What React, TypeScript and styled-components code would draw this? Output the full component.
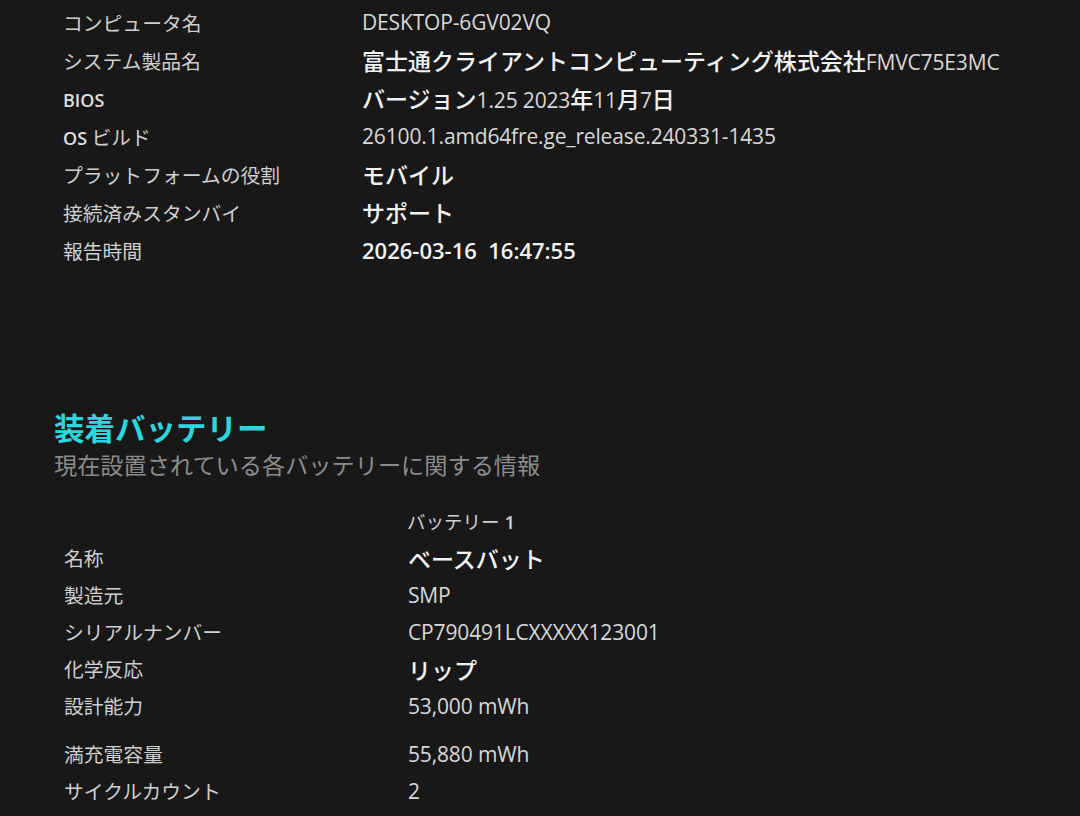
import React from "react";
import styled, { createGlobalStyle } from "styled-components";

const Global = createGlobalStyle`
  html, body { margin: 0; padding: 0; background: #181818; }
  body { font-family: "Noto Sans", "Noto Sans CJK JP", sans-serif; color: #d6d6d6; }
`;

const Page = styled.div`
  width: 1080px;
  height: 816px;
  overflow: hidden;
  background: #181818;
  padding: 3px 0 0 54px;
  box-sizing: border-box;
`;

const Table = styled.div<{ $indent: number }>`
  display: flex;
  flex-direction: column;
  padding-left: ${(p) => p.$indent}px;
`;

const RowBox = styled.div<{ $labelWidth: number; $h: number; $gap?: number }>`
  display: grid;
  grid-template-columns: ${(p) => p.$labelWidth}px 1fr;
  height: ${(p) => p.$h}px;
  margin-top: ${(p) => p.$gap ?? 0}px;
  align-items: center;
`;

const Label = styled.div`
  font-family: "Noto Sans CJK JP", sans-serif;
  font-size: 19.8px;
  color: #cfcfcf;
  white-space: nowrap;
`;

const LatinLabel = styled.span`
  font-family: "Open Sans", sans-serif;
  font-weight: 600;
  font-size: 18px;
  color: #dedede;
`;

const Value = styled.div`
  font-family: "Open Sans", "Noto Sans CJK JP", sans-serif;
  font-size: 21px;
  letter-spacing: -0.15px;
  color: #d8d8d8;
  white-space: nowrap;
`;

const Jp = styled.span`
  font-family: "Noto Sans CJK JP", sans-serif;
  font-size: 23px;
  font-weight: 500;
  letter-spacing: 0;
  color: #f2f2f2;
`;

const Stamp = styled.span`
  font-family: "Open Sans", sans-serif;
  font-size: 22px;
  font-weight: 600;
  letter-spacing: 0;
  color: #f2f2f2;
`;

const Heading = styled.h2`
  margin: 138px 0 0 0;
  height: 40px;
  line-height: 40px;
  font-family: "Noto Sans CJK JP", sans-serif;
  font-weight: 700;
  font-size: 30.5px;
  color: #2bd6de;
`;

const Subtitle = styled.div`
  height: 34px;
  line-height: 34px;
  font-family: "Noto Sans CJK JP", sans-serif;
  font-size: 23.2px;
  color: #8c8c8c;
`;

const ColHead = styled.div`
  margin: 25px 0 3px 353px;
  height: 30px;
  line-height: 30px;
  font-family: "Noto Sans CJK JP", sans-serif;
  font-size: 18.5px;
  color: #d0d0d0;
`;

const Num = styled.span`
  font-family: "Open Sans", sans-serif;
  font-weight: 600;
  margin-left: 5px;
`;

type Row = { label: React.ReactNode; value: React.ReactNode; gap?: number };

const sysRows: Row[] = [
  { label: "コンピュータ名", value: "DESKTOP-6GV02VQ" },
  { label: "システム製品名", value: <><Jp>富士通クライアントコンピューティング株式会社</Jp>FMVC75E3MC</> },
  { label: <LatinLabel>BIOS</LatinLabel>, value: <><Jp>バージョン</Jp>1.25 2023<Jp>年</Jp>11<Jp>月</Jp>7<Jp>日</Jp></> },
  { label: <><LatinLabel>OS</LatinLabel> ビルド</>, value: "26100.1.amd64fre.ge_release.240331-1435" },
  { label: "プラットフォームの役割", value: <Jp>モバイル</Jp> },
  { label: "接続済みスタンバイ", value: <Jp>サポート</Jp> },
  { label: "報告時間", value: <Stamp>2026-03-16&nbsp;&nbsp;16:47:55</Stamp> },
];

const batRows: Row[] = [
  { label: "名称", value: <Jp>ベースバット</Jp> },
  { label: "製造元", value: "SMP" },
  { label: "シリアルナンバー", value: "CP790491LCXXXXX123001" },
  { label: "化学反応", value: <Jp>リップ</Jp> },
  { label: "設計能力", value: "53,000 mWh" },
  { label: "満充電容量", value: "55,880 mWh", gap: 11 },
  { label: "サイクルカウント", value: "2" },
];

export default function App() {
  return (
    <>
      <Global />
      <Page>
        <Table $indent={9}>
          {sysRows.map((r, i) => (
            <RowBox key={i} $labelWidth={299} $h={38}>
              <Label>{r.label}</Label>
              <Value>{r.value}</Value>
            </RowBox>
          ))}
        </Table>
        <Heading>装着バッテリー</Heading>
        <Subtitle>現在設置されている各バッテリーに関する情報</Subtitle>
        <ColHead>バッテリー<Num>1</Num></ColHead>
        <Table $indent={10}>
          {batRows.map((r, i) => (
            <RowBox key={i} $labelWidth={344} $h={37} $gap={r.gap}>
              <Label>{r.label}</Label>
              <Value>{r.value}</Value>
            </RowBox>
          ))}
        </Table>
      </Page>
    </>
  );
}
